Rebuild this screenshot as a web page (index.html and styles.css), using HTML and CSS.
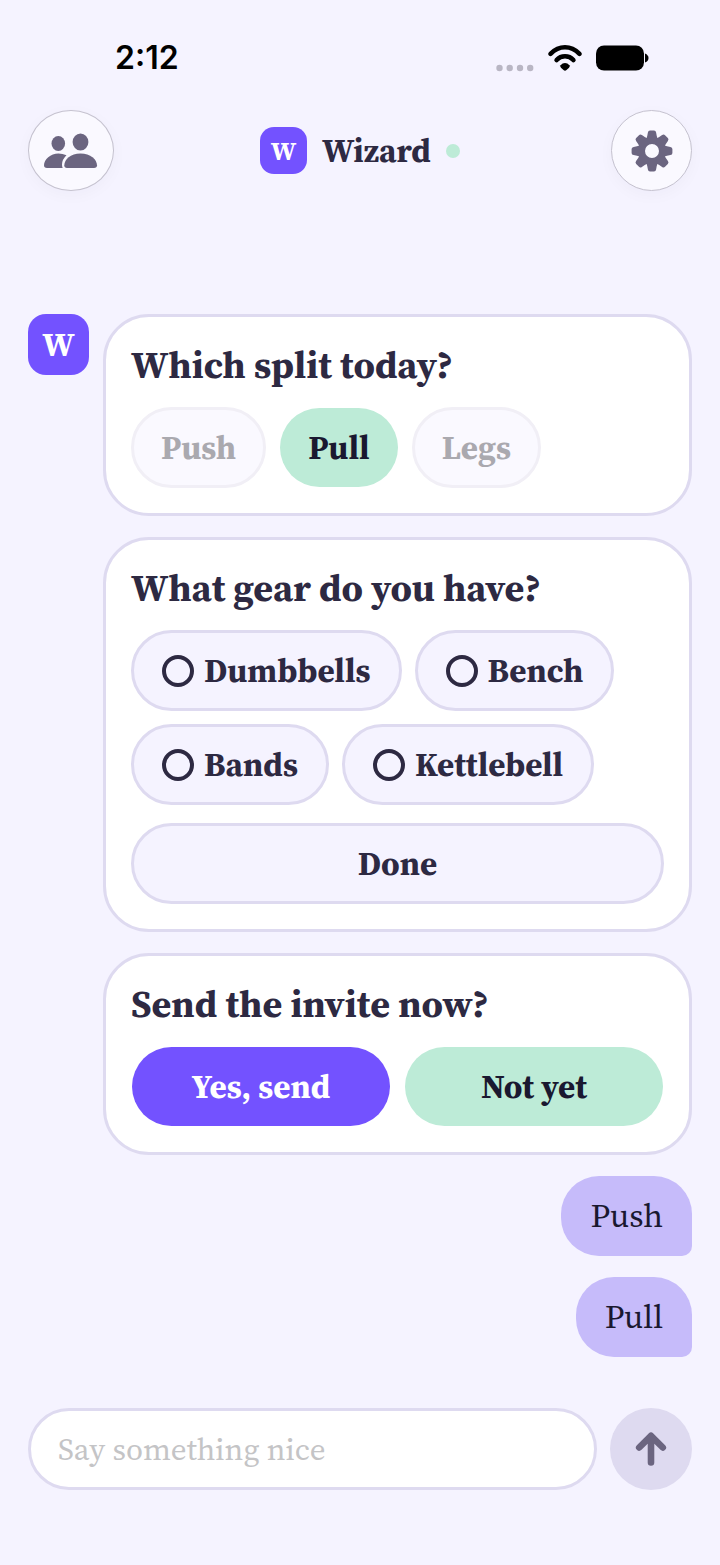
FILE: index.html
```html
<!DOCTYPE html>
<html lang="en">
<head>
    <meta charset="UTF-8">
    <meta name="viewport" content="width=device-width, initial-scale=1.0">
    <title>Wizard</title>
    <link rel="stylesheet" href="styles.css">
</head>
<body>
    <div class="status-bar">
        <span class="time">2:12</span>
        <div class="status-icons">
            <svg class="dots" width="38" height="8" viewBox="0 0 38 8">
                <circle cx="3.500" cy="4" r="3.200"/>
                <circle cx="13.700" cy="4" r="3.200"/>
                <circle cx="24" cy="4" r="3.200"/>
                <circle cx="34.200" cy="4" r="3.200"/>
            </svg>
            <svg width="36" height="28" viewBox="0 0 36 28">
                <path d="M3.500 9.800Q10 3.300 18 3.300T32.500 9.800M9.600 16Q13 12.300 18 12.300T26.400 16" fill="none" stroke="#000" stroke-width="4.600" stroke-linecap="round"/>
                <path d="M13.600 21.300Q15.500 19 18 19T22.400 21.300Q23.300 22.600 22 23.800L19.500 26Q18 27.300 16.500 26L14 23.800Q12.700 22.600 13.600 21.300Z"/>
            </svg>
            <svg class="battery" width="53" height="26" viewBox="0 0 53 26">
                <rect x="0" y="0.500" width="48" height="25" rx="8"/>
                <path d="M49 8.500Q52.500 10 52.500 13T49 17.500Z"/>
            </svg>
        </div>
    </div>

    <header class="header">
        <button class="round-button people" aria-label="Friends">
            <svg width="54" height="36" viewBox="0 0 54 36">
                <ellipse cx="14.300" cy="10.500" rx="6.800" ry="7.600"/>
                <ellipse cx="36.500" cy="9" rx="7.900" ry="8.600"/>
                <path d="M14.500 20.500Q18.500 20.500 22.500 22.200Q18 26.500 18 31.500Q18 33.500 18.700 35H3Q0 35 0 32.300C0 26.500 6.500 20.500 14.500 20.500Z"/>
                <path d="M36.500 20.500C46.500 20.500 53 26.500 53 32.300Q53 35 50 35H23Q20.300 35 20.300 32.300C20.300 26.500 26.500 20.500 36.500 20.500Z"/>
            </svg>
        </button>
        <div class="brand">
            <span class="logo logo-small">W</span>
            <h1>Wizard</h1>
            <span class="online-dot"></span>
        </div>
        <button class="round-button settings" aria-label="Settings">
            <svg width="42" height="42" viewBox="0 0 42 42">
                <defs>
                    <path id="tooth" d="M15.500 8.500Q16.300 6.500 16.900 2.600Q17.200 .6 19 .6H23Q24.800 .6 25.100 2.600Q25.700 6.500 26.500 8.500L21 14Z"/>
                </defs>
                <circle cx="21" cy="21" r="10.500" fill="none" stroke="#6b6580" stroke-width="7"/>
                <use href="#tooth"/>
                <use href="#tooth" transform="rotate(45 21 21)"/>
                <use href="#tooth" transform="rotate(90 21 21)"/>
                <use href="#tooth" transform="rotate(135 21 21)"/>
                <use href="#tooth" transform="rotate(180 21 21)"/>
                <use href="#tooth" transform="rotate(225 21 21)"/>
                <use href="#tooth" transform="rotate(270 21 21)"/>
                <use href="#tooth" transform="rotate(315 21 21)"/>
            </svg>
        </button>
    </header>

    <main class="chat">
        <div class="bot-row">
            <span class="logo">W</span>
            <div class="cards">
                <section class="card">
                    <h2>Which split today?</h2>
                    <div class="chips">
                        <button class="chip" disabled>Push</button>
                        <button class="chip picked">Pull</button>
                        <button class="chip" disabled>Legs</button>
                    </div>
                </section>
                <section class="card">
                    <h2>What gear do you have?</h2>
                    <div class="chips">
                        <label class="chip option"><input type="checkbox" name="gear">Dumbbells</label>
                        <label class="chip option"><input type="checkbox" name="gear">Bench</label>
                        <label class="chip option"><input type="checkbox" name="gear">Bands</label>
                        <label class="chip option"><input type="checkbox" name="gear">Kettlebell</label>
                    </div>
                    <button class="chip">Done</button>
                </section>
                <section class="card">
                    <h2>Send the invite now?</h2>
                    <div class="answers">
                        <button class="chip primary">Yes, send</button>
                        <button class="chip picked">Not yet</button>
                    </div>
                </section>
            </div>
        </div>
        <p class="bubble">Push</p>
        <p class="bubble">Pull</p>
    </main>

    <form class="composer">
        <input type="text" placeholder="Say something nice" aria-label="Message">
        <button type="button" class="send" aria-label="Send">
            <svg width="32" height="36" viewBox="0 0 32 36">
                <path d="M16 31.500V5M4.200 16.500L16 4.800L27.800 16.500" fill="none" stroke="#6b6580" stroke-width="6.600" stroke-linecap="round" stroke-linejoin="round"/>
            </svg>
        </button>
    </form>
</body>
</html>
```

FILE: styles.css
```css
/* Basic Reset */
* {
    margin: 0;
    padding: 0;
    box-sizing: border-box;
}

/* Global Styles */
body {
    font-family: 'Source Serif 4', 'Liberation Serif', serif;
    font-size: 33px;
    color: #2d2942;
    background: #f5f3ff;
    min-height: 100vh;
    display: flex;
    flex-direction: column;
}

button,
input {
    font: inherit;
    color: inherit;
}

button {
    cursor: pointer;
}

svg {
    display: block;
}

/* Status bar */
.status-bar {
    display: flex;
    justify-content: space-between;
    align-items: center;
    padding: 38px 71px 32px 115px;
    color: #000;
}

.time {
    font-family: 'Inter', sans-serif;
    font-size: 32px;
    font-weight: 600;
    line-height: 40px;
}

.status-icons {
    display: flex;
    align-items: center;
    gap: 13px;
}

.dots {
    fill: #b9b6c4;
    align-self: flex-end;
}

/* Header */
.header {
    display: grid;
    grid-template-columns: 1fr auto 1fr;
    align-items: center;
    padding: 0 28px;
}

.round-button {
    width: 81px;
    height: 81px;
    display: flex;
    justify-content: center;
    align-items: center;
    border: 1px solid #c5c2cf;
    border-radius: 50%;
    background: #faf9ff;
    box-shadow: 0 4px 16px rgba(45, 41, 66, 0.03);
    fill: #6b6580;
}

.people {
    width: 86px;
}

.settings {
    justify-self: end;
}

.brand {
    display: flex;
    align-items: center;
    gap: 15px;
}

h1 {
    font-size: 33px;
    line-height: 46px;
}

.online-dot {
    width: 14px;
    height: 14px;
    border-radius: 50%;
    background: #bdebd7;
}

.logo {
    flex: none;
    width: 61px;
    height: 61px;
    display: flex;
    justify-content: center;
    align-items: center;
    border-radius: 18px;
    background: #7352ff;
    color: #fff;
    font-size: 33px;
    font-weight: bold;
}

.logo-small {
    width: 47px;
    height: 47px;
    border-radius: 14px;
    font-size: 26px;
}

/* Chat */
.chat {
    flex: 1;
    display: flex;
    flex-direction: column;
    justify-content: flex-end;
    align-items: flex-end;
    gap: 21px;
    padding: 40px 28px 51px;
}

.bot-row {
    width: 100%;
    display: flex;
    align-items: flex-start;
    gap: 14px;
}

.cards {
    flex: 1;
    display: flex;
    flex-direction: column;
    gap: 21px;
}

.card {
    display: flex;
    flex-direction: column;
    gap: 18px;
    padding: 25px;
    border: 3px solid #dedaf0;
    border-radius: 46px;
    background: #fff;
}

h2 {
    font-size: 38px;
    line-height: 47px;
}

.chips {
    display: flex;
    flex-wrap: wrap;
    gap: 13px;
}

.chip {
    min-height: 81px;
    display: flex;
    justify-content: center;
    align-items: center;
    padding: 0 27px;
    border: 3px solid #dedaf0;
    border-radius: 41px;
    background: #f5f3ff;
    font-weight: bold;
}

.chip:disabled {
    border-color: #f1eff6;
    background: #faf9ff;
    color: #aaa9af;
}

.picked,
.primary {
    padding: 0 28px;
    border: 1px solid transparent;
    background-clip: padding-box;
}

.picked {
    background-color: #bdebd7;
    color: #1a1830;
}

.primary {
    background-color: #7352ff;
    color: #fff;
}

.option {
    gap: 10px;
    padding: 0 28px;
    cursor: pointer;
}

.option input {
    appearance: none;
    width: 32px;
    height: 32px;
    border: 4px solid #2d2942;
    border-radius: 50%;
}

.option input:checked {
    background: #2d2942;
}

.answers {
    display: grid;
    grid-template-columns: 1fr 1fr;
    gap: 13px;
}

.bubble {
    padding: 0 29px;
    border-radius: 38px 38px 10px 38px;
    background: #c6bbfa;
    color: #1a1830;
    line-height: 80px;
}

/* Composer */
.composer {
    display: flex;
    gap: 13px;
    padding: 0 28px 75px;
}

.composer input {
    flex: 1;
    min-width: 0;
    height: 82px;
    padding: 0 27px;
    border: 3px solid #dedaf0;
    border-radius: 41px;
    background: #fff;
    font-size: 31px;
}

.composer input::placeholder {
    color: #c4c4c6;
    opacity: 1;
}

.send {
    width: 82px;
    height: 82px;
    display: flex;
    justify-content: center;
    align-items: center;
    border: none;
    border-radius: 50%;
    background: #dedaf0;
}
```
